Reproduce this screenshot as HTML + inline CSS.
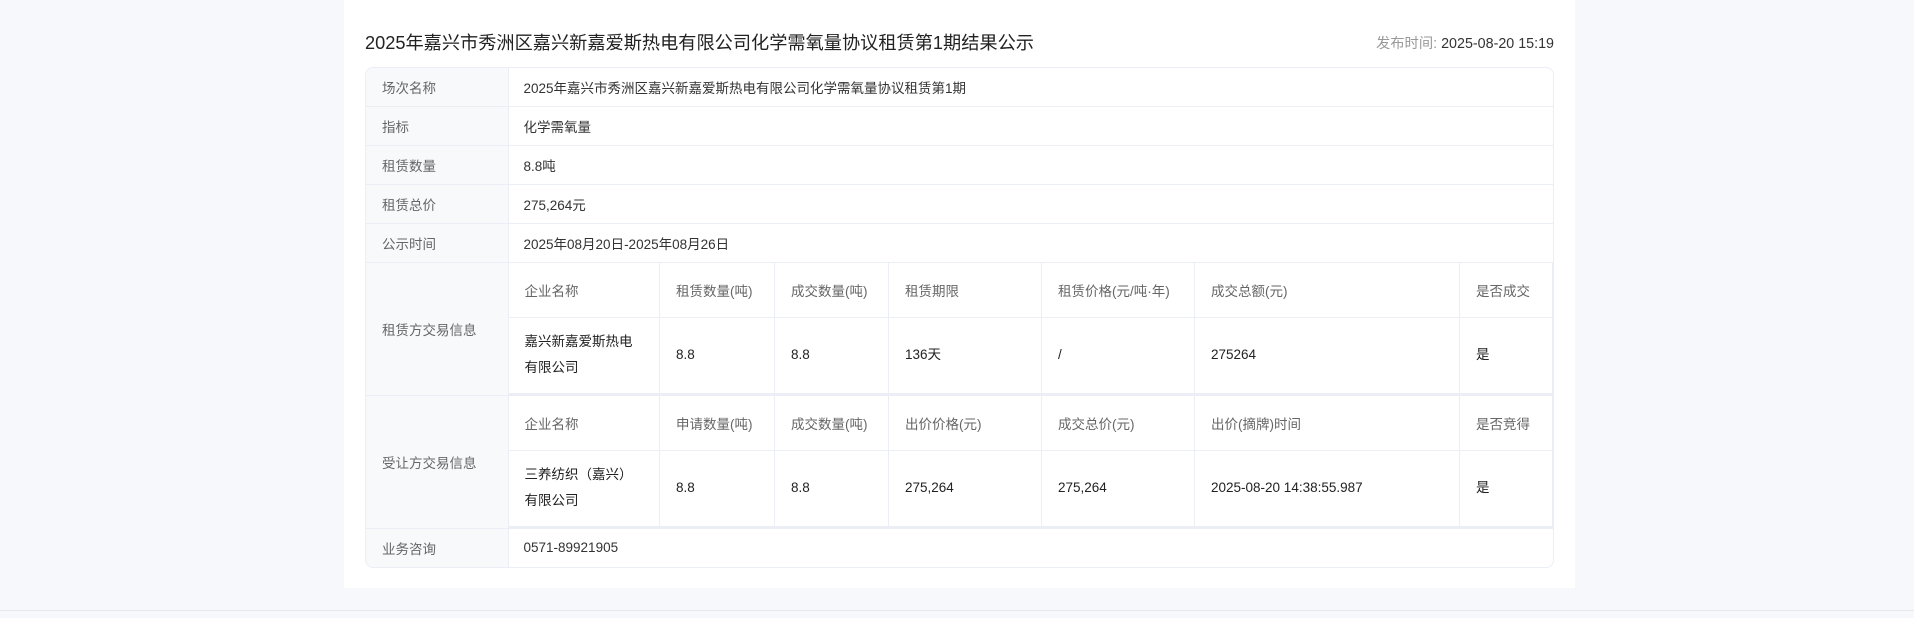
<!DOCTYPE html>
<html><head><meta charset="utf-8"><style>
*{margin:0;padding:0;box-sizing:border-box}
body{width:1914px;height:618px;background:#f7f8fb;font-family:"Liberation Sans","Noto Sans CJK SC",sans-serif;position:relative;overflow:hidden;color:#333}
.panel{position:absolute;left:344px;top:0;width:1231px;height:588px;background:#fff}
.line{position:absolute;left:0;top:610px;width:1914px;height:1px;background:#e6e8ec}
.title{position:absolute;left:365px;top:30px;font-size:18.2px;color:#222;line-height:26px}
.time{position:absolute;right:360px;top:34px;font-size:14.3px;color:#333;line-height:20px}
.time span{color:#999}
.tbl{position:absolute;left:365px;top:67px;width:1189px;border:1px solid #ebeef5;border-radius:8px;overflow:hidden}
table{border-collapse:collapse;width:100%;table-layout:fixed}
td{font-size:13.5px;vertical-align:middle;text-align:left}
.main>tbody>tr>td{border-top:1px solid #ebeef5;height:39px}
.main>tbody>tr:first-child>td{border-top:none;height:38px}
.lab{background:#f8f9fb;color:#666;padding-left:16px;border-right:1px solid #ebeef5}
.val{padding-left:15px;color:#333}
.sub td{border-right:1px solid #ebeef5;border-bottom:1px solid #ebeef5;padding-left:16px}
.sub tr.h td{height:55px;color:#666}
.sub tr.d td{height:76px;color:#222;line-height:26px}
.sub tr.d{border-bottom:2px solid #ebeef5}
.subcell{padding:0!important}
</style></head><body>
<div class="panel"></div>
<div class="line"></div>
<div class="title">2025年嘉兴市秀洲区嘉兴新嘉爱斯热电有限公司化学需氧量协议租赁第1期结果公示</div>
<div class="time"><span>发布时间: </span>2025-08-20 15:19</div>
<div class="tbl">
<table class="main">
<colgroup><col style="width:142px"><col></colgroup>
<tr><td class="lab">场次名称</td><td class="val">2025年嘉兴市秀洲区嘉兴新嘉爱斯热电有限公司化学需氧量协议租赁第1期</td></tr>
<tr><td class="lab">指标</td><td class="val">化学需氧量</td></tr>
<tr><td class="lab">租赁数量</td><td class="val">8.8吨</td></tr>
<tr><td class="lab">租赁总价</td><td class="val">275,264元</td></tr>
<tr><td class="lab">公示时间</td><td class="val">2025年08月20日-2025年08月26日</td></tr>
<tr><td class="lab">租赁方交易信息</td><td class="subcell">
<table class="sub"><colgroup><col style="width:151px"><col style="width:115px"><col style="width:114px"><col style="width:153px"><col style="width:153px"><col style="width:265px"><col></colgroup>
<tr class="h"><td>企业名称</td><td>租赁数量(吨)</td><td>成交数量(吨)</td><td>租赁期限</td><td>租赁价格(元/吨·年)</td><td>成交总额(元)</td><td>是否成交</td></tr>
<tr class="d"><td>嘉兴新嘉爱斯热电<br>有限公司</td><td>8.8</td><td>8.8</td><td>136天</td><td>/</td><td>275264</td><td>是</td></tr>
</table></td></tr>
<tr><td class="lab">受让方交易信息</td><td class="subcell">
<table class="sub"><colgroup><col style="width:151px"><col style="width:115px"><col style="width:114px"><col style="width:153px"><col style="width:153px"><col style="width:265px"><col></colgroup>
<tr class="h"><td>企业名称</td><td>申请数量(吨)</td><td>成交数量(吨)</td><td>出价价格(元)</td><td>成交总价(元)</td><td>出价(摘牌)时间</td><td>是否竞得</td></tr>
<tr class="d"><td>三养纺织（嘉兴）<br>有限公司</td><td>8.8</td><td>8.8</td><td>275,264</td><td>275,264</td><td>2025-08-20 14:38:55.987</td><td>是</td></tr>
</table></td></tr>
<tr><td class="lab">业务咨询</td><td class="val">0571-89921905</td></tr>
</table>
</div>
</body></html>
